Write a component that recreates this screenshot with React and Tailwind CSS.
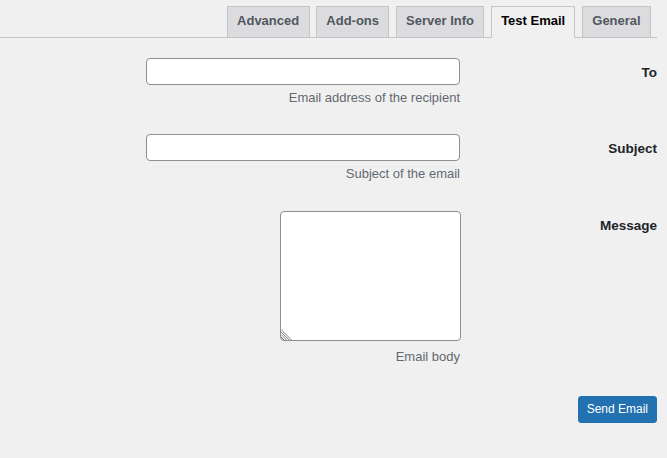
import { useState } from "react";

const tabs = ["General", "Test Email", "Server Info", "Add-ons", "Advanced"];

const Row = ({ label, children, className = "" }) => (
  <div className={`flex ${className}`}>
    <div className="w-[196px] shrink-0 pt-[5px] text-[13.5px] font-bold leading-[20px] text-[#1d2327]">
      {label}
    </div>
    <div className="flex flex-col items-start">{children}</div>
  </div>
);

const Hint = ({ children, className = "" }) => (
  <p className={`mr-px text-[13px] leading-[20px] text-[#646970] ${className}`}>{children}</p>
);

// hatched resize grip, bottom-left corner (rtl)
const Grip = () => (
  <svg
    width="13"
    height="13"
    viewBox="0 0 13 13"
    className="pointer-events-none absolute bottom-[1px] left-[1px]"
  >
    <g stroke="#7c7c7c" strokeWidth="1">
      <line x1="0" y1="10" x2="3" y2="13" />
      <line x1="0" y1="7.5" x2="5.5" y2="13" />
      <line x1="0" y1="5" x2="8" y2="13" />
      <line x1="0" y1="2.5" x2="10.5" y2="13" />
    </g>
  </svg>
);

export default function App() {
  const [active, setActive] = useState("Test Email");
  const [form, setForm] = useState({ to: "", subject: "", message: "" });

  const handleChange = (e) => {
    const { name, value } = e.target;
    setForm((prev) => ({ ...prev, [name]: value }));
  };

  return (
    <div
      dir="rtl"
      className="min-h-screen bg-[#f0f0f1] font-['Liberation_Sans',Arial,sans-serif]"
    >
      {/* tab bar */}
      <div className="mr-[10px] flex gap-[6.5px] border-b border-[#c3c4c7] pr-[6px] pt-[6px]">
        {tabs.map((tab) => (
          <button
            key={tab}
            type="button"
            onClick={() => setActive(tab)}
            className={`-mb-px border px-[9.3px] pt-[4px] pb-[6px] text-[13px] font-bold leading-[20px] ${
              active === tab
                ? "border-[#c3c4c7] border-b-[#f0f0f1] bg-[#f0f0f1] text-black"
                : "border-[#c3c4c7] bg-[#dcdcde] text-[#50575e]"
            }`}
          >
            {tab}
          </button>
        ))}
      </div>

      <div className="mr-[10px] pt-[20px]">
        <Row label="To">
          <input
            type="email"
            name="to"
            value={form.to}
            onChange={handleChange}
            className="mr-px h-[27px] w-[314px] rounded-[4px] border border-[#8c8f94] bg-white px-2 outline-none"
          />
          <Hint className="mt-[3px]">Email address of the recipient</Hint>
        </Row>

        <Row label="Subject" className="mt-[26px]">
          <input
            type="text"
            name="subject"
            value={form.subject}
            onChange={handleChange}
            className="mr-px h-[27px] w-[314px] rounded-[4px] border border-[#8c8f94] bg-white px-2 outline-none"
          />
          <Hint className="mt-[3px]">Subject of the email</Hint>
        </Row>

        <Row label="Message" className="mt-[27px]">
          <div className="relative">
            <textarea
              name="message"
              value={form.message}
              onChange={handleChange}
              className="block h-[130px] w-[181px] resize-none rounded-[4px] border border-[#8c8f94] bg-white p-2 outline-none"
            />
            <Grip />
          </div>
          <Hint className="mt-[6px]">Email body</Hint>
        </Row>

        <div className="mt-[29px] flex">
          <button
            type="button"
            className="h-[27px] rounded-[3px] border border-[#2271b1] bg-[#2271b1] px-[8px] text-[12px] leading-[25px] text-white"
          >
            Send Email
          </button>
        </div>
      </div>
    </div>
  );
}
